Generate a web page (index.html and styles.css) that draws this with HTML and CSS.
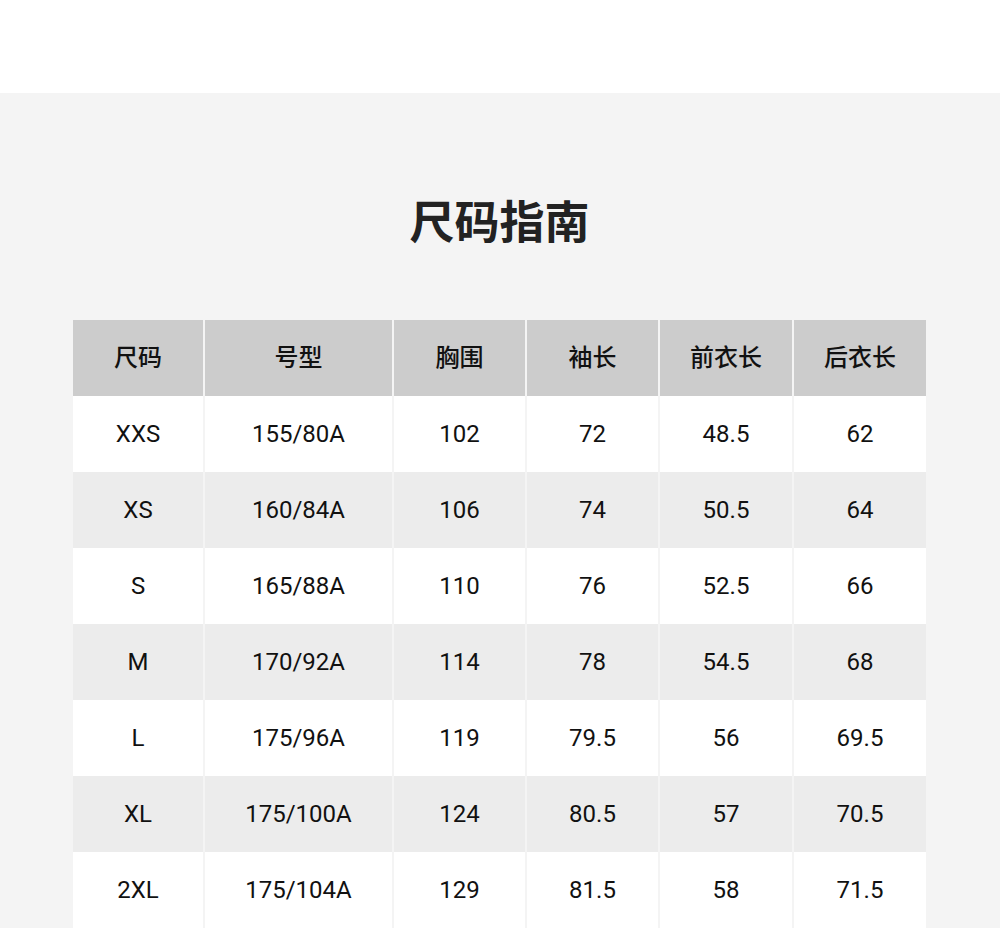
FILE: index.html
```html
<!DOCTYPE html>
<html lang="zh">
<head>
<meta charset="utf-8">
<link rel="stylesheet" href="styles.css">
</head>
<body>
<div class="top"></div>
<section class="guide">
  <h1 class="title">尺码指南</h1>
  <div class="table">
    <div class="cell head">尺码</div><div class="cell head">号型</div><div class="cell head">胸围</div><div class="cell head">袖长</div><div class="cell head">前衣长</div><div class="cell head">后衣长</div>
    <div class="cell">XXS</div><div class="cell">155/80A</div><div class="cell">102</div><div class="cell">72</div><div class="cell">48.5</div><div class="cell">62</div>
    <div class="cell alt">XS</div><div class="cell alt">160/84A</div><div class="cell alt">106</div><div class="cell alt">74</div><div class="cell alt">50.5</div><div class="cell alt">64</div>
    <div class="cell">S</div><div class="cell">165/88A</div><div class="cell">110</div><div class="cell">76</div><div class="cell">52.5</div><div class="cell">66</div>
    <div class="cell alt">M</div><div class="cell alt">170/92A</div><div class="cell alt">114</div><div class="cell alt">78</div><div class="cell alt">54.5</div><div class="cell alt">68</div>
    <div class="cell">L</div><div class="cell">175/96A</div><div class="cell">119</div><div class="cell">79.5</div><div class="cell">56</div><div class="cell">69.5</div>
    <div class="cell alt">XL</div><div class="cell alt">175/100A</div><div class="cell alt">124</div><div class="cell alt">80.5</div><div class="cell alt">57</div><div class="cell alt">70.5</div>
    <div class="cell">2XL</div><div class="cell">175/104A</div><div class="cell">129</div><div class="cell">81.5</div><div class="cell">58</div><div class="cell">71.5</div>
  </div>
</section>
</body>
</html>
```

FILE: styles.css
```css
html, body {
  margin: 0;
  padding: 0;
}
body {
  background: #f4f4f4;
  font-family: Roboto, "Noto Sans CJK SC", sans-serif;
  color: #111;
  overflow: hidden;
}
.top {
  height: 93px;
  background: #ffffff;
}
.guide {
  padding: 97px 74px 0 73px;
}
.title {
  margin: 0;
  height: 60px;
  line-height: 60px;
  text-align: center;
  font-family: "Noto Sans CJK SC", sans-serif;
  font-size: 45px;
  font-weight: 600;
  color: #222;
}
.table {
  margin-top: 70px;
  display: grid;
  grid-template-columns: 130px 187px 131px 131px 132px 132px;
  column-gap: 2px;
  grid-auto-rows: 76px;
}
.cell {
  background: #ffffff;
  display: flex;
  align-items: center;
  justify-content: center;
  font-size: 24px;
  line-height: 30px;
  font-family: Roboto, "Noto Sans CJK SC", sans-serif;
  color: #111;
}
.cell.alt {
  background: #ececec;
}
.cell.head {
  background: #cccccc;
  font-family: "Noto Sans CJK SC", sans-serif;
  font-size: 24px;
  font-weight: 500;
  padding-bottom: 4px;
  box-sizing: border-box;
  color: #111;
}
```
